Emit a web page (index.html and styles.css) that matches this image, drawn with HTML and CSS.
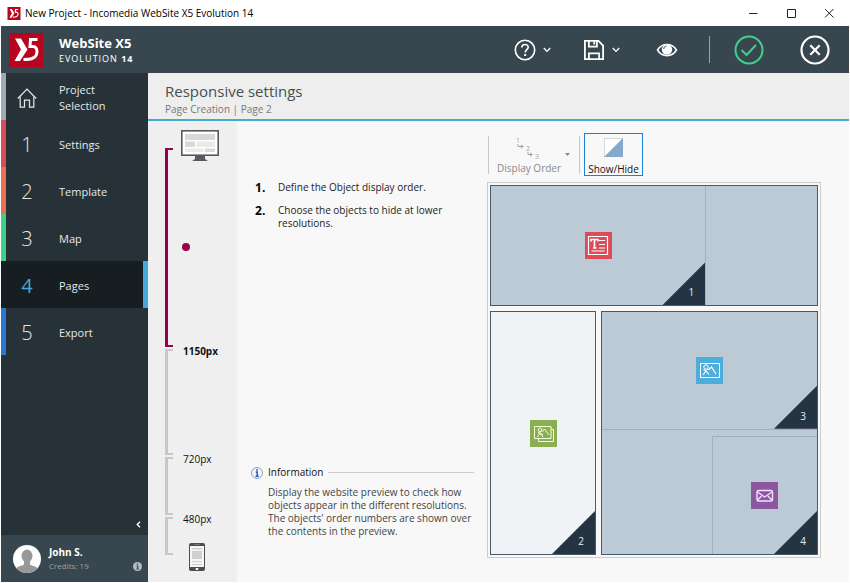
FILE: index.html
```html
<!DOCTYPE html>
<html lang="en">
<head>
<meta charset="utf-8">
<title>New Project - Incomedia WebSite X5 Evolution 14</title>
<link rel="stylesheet" href="styles.css">
</head>
<body>
<svg class="defs" aria-hidden="true">
  <symbol id="logo" viewBox="0 0 34 34">
    <rect width="34" height="34" fill="#b8051f"/>
    <path d="M5.500 5.500h6l6.500 11L10.500 28H5l6.500-11.500z" fill="#fff"/>
    <path d="M28 6.500h-7l-.5 7h3c5.500 0 5.500 10-1 12-2 .8-5 1-8.500 1" fill="none" stroke="#fff" stroke-width="3"/>
  </symbol>
  <symbol id="chevron" viewBox="0 0 8 6"><path d="M.8 1l3.200 3.400L7.200 1" fill="none" stroke="currentColor" stroke-width="1.300"/></symbol>
</svg>
<div class="window">
  <div class="titlebar">
    <svg class="titlebar-logo" aria-hidden="true"><use href="#logo"/></svg>
    <span class="titlebar-text">New Project - Incomedia WebSite X5 Evolution 14</span>
    <button class="window-button" aria-label="Minimize"><svg viewBox="0 0 10 10"><path d="M1 5.500h8.500"/></svg></button>
    <button class="window-button" aria-label="Maximize"><svg viewBox="0 0 10 10"><path d="M1.500 1.500h8v8h-8z"/></svg></button>
    <button class="window-button" aria-label="Close"><svg viewBox="0 0 10 10"><path d="M1 1l8.500 8.500M9.500 1L1 9.500"/></svg></button>
  </div>

  <header class="header">
    <svg class="brand-logo" aria-hidden="true"><use href="#logo"/></svg>
    <div class="brand">
      <div class="brand-name">WebSite X5</div>
      <div class="brand-edition">EVOLUTION <b>14</b></div>
    </div>
    <div class="actions">
      <button class="action" aria-label="Help">
        <svg width="22" height="22" viewBox="0 0 22 22" fill="none" stroke="#fff" stroke-width="1.600"><circle cx="11" cy="11" r="9.700"/><path d="M7.800 8.600c0-4.200 6.400-4 6.400-.4 0 2.300-3 2.500-3 5.300"/><path d="M11.200 15v2" stroke-width="2"/></svg>
        <svg class="chevron" aria-hidden="true"><use href="#chevron"/></svg>
      </button>
      <button class="action" aria-label="Save">
        <svg width="22" height="22" viewBox="0 0 22 22" fill="none" stroke="#fff" stroke-width="1.800"><path d="M1.900 1.900h13.600l4.600 4.600v13.600H1.900z"/><path d="M5.900 2v5.600h8V2M11.200 2.500v3M5.900 20v-5.700h10.200V20"/></svg>
        <svg class="chevron" aria-hidden="true"><use href="#chevron"/></svg>
      </button>
      <button class="action" aria-label="Preview">
        <svg width="22" height="22" viewBox="0 0 22 22"><path d="M1.500 11C6 3.500 16 3.500 20.500 11 16 18.500 6 18.500 1.500 11z" fill="none" stroke="#fff" stroke-width="1.500"/><circle cx="11" cy="10.500" r="5.200" fill="#fff"/><path d="M7.800 10c0-1.800 1-2.800 2.600-3" fill="none" stroke="#38474f"/></svg>
      </button>
      <span class="divider"></span>
      <button class="action" aria-label="Confirm">
        <svg width="30" height="30" viewBox="0 0 30 30" fill="none" stroke="#41cf8c" stroke-width="2"><circle cx="15" cy="15" r="13.500"/><path d="M7.500 15l5 5 9.500-10"/></svg>
      </button>
      <button class="action action-close" aria-label="Cancel">
        <svg width="30" height="30" viewBox="0 0 30 30" fill="none" stroke="#fff" stroke-width="2.200"><circle cx="15" cy="15" r="13.500"/><path d="M10.300 10.300l9.400 9.400M19.700 10.300l-9.400 9.400"/></svg>
      </button>
    </div>
  </header>

  <div class="body">
    <aside class="sidebar">
      <nav class="steps">
        <a class="step step-home" href="#"><span class="step-icon"><svg width="20" height="20" viewBox="0 0 20 20" fill="none" stroke="#e4e8ea" stroke-width="1.200"><path d="M.8 10.500L10 1.200l9.200 9.300"/><path d="M3.200 8.500v10.700h4.300v-7h5v7h4.300V8.500"/></svg></span><span>Project<br>Selection</span></a>
        <a class="step step-settings" href="#"><span class="step-icon">1</span><span>Settings</span></a>
        <a class="step step-template" href="#"><span class="step-icon">2</span><span>Template</span></a>
        <a class="step step-map" href="#"><span class="step-icon">3</span><span>Map</span></a>
        <a class="step step-active" href="#" aria-current="step"><span class="step-icon">4</span><span>Pages</span></a>
        <a class="step step-export" href="#"><span class="step-icon">5</span><span>Export</span></a>
      </nav>
      <button class="collapse" aria-label="Collapse"><svg width="5" height="7" viewBox="0 0 5 7"><path d="M4 .8L1.200 3.500 4 6.200" fill="none" stroke="#fff" stroke-width="1.300"/></svg></button>
      <div class="user">
        <svg width="28" height="28" viewBox="0 0 28 28"><defs><clipPath id="face"><circle cx="14" cy="14" r="14"/></clipPath></defs><circle cx="14" cy="14" r="14" fill="#fff"/><g clip-path="url(#face)" fill="#989898"><ellipse cx="14" cy="11" rx="5.500" ry="6.500"/><path d="M11 15h6v4.500c2 1.500 7 1.500 8 4.500v4H3v-4c1-3 6-3 8-4.500z"/></g></svg>
        <div class="user-text">
          <div class="user-name">John S.</div>
          <div class="user-credits">Credits: 19</div>
        </div>
        <button class="user-info" aria-label="Account information"><svg width="9" height="9" viewBox="0 0 9 9"><circle cx="4.500" cy="4.500" r="4.500" fill="#b3bcc0"/><path d="M4.500 1.500v1.300M3.500 4h1.200v2.800M3.400 7h2.400" stroke="#38474f" stroke-width="1.200" fill="none"/></svg></button>
      </div>
    </aside>

    <main class="main">
      <div class="page-head">
        <h1>Responsive settings</h1>
        <p>Page Creation | Page 2</p>
      </div>
      <div class="workspace">
        <section class="resolutions" aria-label="Resolutions">
          <div class="range range-desktop">
            <span class="bracket"></span>
            <svg class="monitor" width="38" height="32" viewBox="0 0 38 32"><path d="M14 25h10v4l3 2H11l3-2z" fill="#59595f"/><rect x=".8" y=".8" width="36.400" height="24.400" fill="#fff" stroke="#59595f" stroke-width="1.600"/><path d="M4 4h30v6H4zM4 11.500h10v5.500H4zM24 18.500h10v3.500H24z" fill="#d9d9d9"/><path d="M15.500 11.500H34v5.500H15.500zM4 18.500h18.500v3.500H4z" fill="#eaeaea"/></svg>
            <span class="marker"></span>
          </div>
          <div class="range range-large"><span class="bracket"></span><b class="range-label">1150px</b></div>
          <div class="range range-medium"><span class="bracket"></span><span class="range-label">720px</span></div>
          <div class="range range-small"><span class="bracket"></span><span class="range-label">480px</span></div>
          <svg class="phone" width="16" height="28" viewBox="0 0 16 28"><rect width="16" height="28" rx="2" fill="#4c4c52"/><path d="M1 3h14v21H1z" fill="#f5f5f5"/><path d="M3 5h10v1.500H3zM3 8h10v8H3zM3 18h10v1H3zM3 21h10v1H3z" fill="#ccd1cf"/><path d="M5 1.500h6" stroke="#777"/><rect x="6.500" y="25" width="3" height="2" rx="1" fill="#fff"/></svg>
        </section>

        <section class="guide">
          <ol class="guide-steps">
            <li>Define the Object display order.</li>
            <li>Choose the objects to hide at lower resolutions.</li>
          </ol>
          <div class="note">
            <h2><svg width="12" height="12" viewBox="0 0 12 12"><circle cx="6" cy="6" r="5.500" fill="#f1f5fc" stroke="#8aa0c0"/><path d="M6 2v1.800M4.800 5h1.400v4M4.500 9.200h3.200" stroke="#2454c6" stroke-width="1.400" fill="none"/></svg>Information</h2>
            <p>Display the website preview to check how objects appear in the different resolutions. The objects' order numbers are shown over the contents in the preview.</p>
          </div>
        </section>

        <section class="editor">
          <div class="toolbar">
            <button class="tool tool-order" disabled>
              <span class="tool-row">
                <svg width="26" height="26" viewBox="0 0 26 26" fill="#a5a5a5" stroke="#a5a5a5"><g stroke="none" class="tiny"><text x="1" y="8">1</text><text x="11" y="16">2</text><text x="20" y="24">3</text></g><path d="M3 9v2.500h3M13 17v2.500h2" fill="none"/><path d="M6 9.500l3 2-3 2zM15 17.500l3 2-3 2z" stroke="none"/></svg>
                <svg class="dropdown" width="5" height="3" viewBox="0 0 5 3"><path d="M0 0h5L2.500 3z" fill="#888"/></svg>
              </span>
              <span>Display Order</span>
            </button>
            <button class="tool tool-toggle" aria-pressed="true">
              <svg width="19" height="19" viewBox="0 0 19 19"><rect x=".5" y=".5" width="18" height="18" fill="#fff" stroke="#b5b5b5" stroke-dasharray="1 1"/><path d="M19 0v19H0z" fill="#86a8ca"/></svg>
              <span>Show/Hide</span>
            </button>
          </div>
          <div class="preview">
            <div class="band band-top">
              <div class="cell cell-lined">
                <svg class="object" viewBox="0 0 27 27"><rect width="27" height="27" fill="#dc4b57"/><g fill="none" stroke="#fff"><path d="M3.500 4.500h19v18h-19z" stroke-width="1.200"/><path d="M6 9.500V7.500h7v2M9.500 8v8M8 16h3.500" stroke-width="1.700"/><path d="M14 8.500h6M14 12.500h6M14 16h6M6.500 19h13"/></g></svg>
                <span class="corner">1</span>
              </div>
              <div class="cell"></div>
            </div>
            <div class="bands">
              <div class="band band-visible">
                <div class="cell">
                  <svg class="object" viewBox="0 0 27 27"><rect width="27" height="27" fill="#8bae52"/><g fill="none" stroke="#f4ffdc"><path d="M4.500 6.500h16.500v12H4.500z"/><path d="M21.500 9.500h2v12h-15v-2.500"/><circle cx="10" cy="9.800" r="1.800"/><path d="M7.500 17l2.500-3.500-2-1 3.500 1 1.500 1.500M10 13l3 4M12 12l2.500-3 4.500 6"/></g></svg>
                  <span class="corner">2</span>
                </div>
              </div>
              <div class="band band-stack">
                <div class="cell">
                  <svg class="object" viewBox="0 0 27 27"><rect width="27" height="27" fill="#4daddb"/><g fill="none" stroke="#fff"><path d="M4.500 6.500h19v14h-19z"/><circle cx="10" cy="10" r="2.200"/><path d="M7 18l3-4-2.500-1.500M10 13.500l3 4M11 12.500h2l2.500-2.500 4.500 7" stroke-width="1.200"/></g></svg>
                  <span class="corner">3</span>
                </div>
                <div class="cell cell-nested">
                  <svg class="object" viewBox="0 0 27 27"><rect width="27" height="27" fill="#8b589f"/><g fill="none" stroke="#f6dfff" stroke-width="1.400"><rect x="6" y="8.500" width="15.500" height="10.500" rx="1.500"/><path d="M6.500 10l7.200 5 7.200-5M6.500 18l4-4M20.900 18l-4-4"/></g></svg>
                  <span class="corner">4</span>
                </div>
              </div>
            </div>
          </div>
        </section>
      </div>
    </main>
  </div>
</div>
</body>
</html>
```
FILE: styles.css
```css
* { box-sizing: border-box; }

body {
  margin: 0;
  background: #fff;
  font: 11px/16px "Open Sans", "Noto Sans", sans-serif;
  color: #222;
}

button {
  margin: 0;
  padding: 0;
  border: 0;
  background: none;
  font: inherit;
  color: inherit;
}

svg { display: block; flex: none; }
.defs { position: absolute; width: 0; height: 0; }
h1, h2, p, ol { margin: 0; padding: 0; font-weight: 400; }

.window {
  display: flex;
  flex-direction: column;
  min-height: 100vh;
  padding: 0 1px 1px;
}

/* Title bar */
.titlebar {
  display: flex;
  align-items: center;
  height: 26px;
  padding: 0 1px 0 6px;
}
.titlebar-logo { width: 14px; height: 13px; margin-right: 4px; }
.titlebar-text { flex: 1; font-size: 10px; color: #000; }
.window-button { display: flex; justify-content: center; width: 38px; }
.window-button svg { width: 10px; height: 10px; fill: none; stroke: #222; }

/* Header */
.header {
  display: flex;
  align-items: center;
  height: 47px;
  padding: 0 19px 0 8px;
  background: #38474f;
  color: #fff;
}
.brand-logo { width: 35px; height: 34px; }
.brand { margin-left: 15px; }
.brand-name { font-size: 13px; font-weight: 700; line-height: 18px; }
.brand-edition { font-size: 9px; line-height: 14px; letter-spacing: 1px; }
.actions { display: flex; align-items: center; margin-left: auto; }
.action { display: flex; align-items: center; gap: 7px; margin-right: 32px; }
.action + .action { margin-right: 36px; }
.action + .action + .action { margin-right: 31px; }
.divider { width: 1px; height: 27px; margin-right: 24px; background: #98a3a8; }
.divider + .action { margin-right: 36px; }
.action.action-close { margin-right: 0; }
.chevron { width: 8px; height: 6px; }

.body { display: flex; flex: 1; }

/* Sidebar */
.sidebar {
  display: flex;
  flex-direction: column;
  width: 147px;
  background: #273238;
  color: #e4e8ea;
}
.step {
  display: flex;
  align-items: center;
  height: 47px;
  padding-top: 2px;
  border-left: 5px solid transparent;
  border-right: 5px solid transparent;
  color: inherit;
  text-decoration: none;
}
.step-icon {
  display: flex;
  justify-content: center;
  width: 42px;
  margin-right: 11px;
  font-size: 20px;
  font-weight: 300;
}
.step-home { border-left-color: #9eabb0; }
.step-settings { border-left-color: #d94c5a; }
.step-template { border-left-color: #e87053; }
.step-map { border-left-color: #41cf8c; }
.step-active {
  border-left-color: #161e22;
  border-right-color: #45aad9;
  background: #161e22;
}
.step-active .step-icon { color: #45aad9; font-weight: 400; }
.step-export { border-left-color: #2878d8; }
.collapse { align-self: flex-end; margin: auto 7px 7px auto; }
.user {
  display: flex;
  align-items: center;
  height: 47px;
  padding: 0 6px 0 12px;
  background: #38474f;
}
.user-text { margin-left: 8px; line-height: 14px; }
.user-name { font-size: 10px; font-weight: 700; color: #fff; }
.user-credits { font-size: 8px; color: #98a4a9; }
.user-info { align-self: flex-end; margin: 0 0 11px auto; }

/* Page area */
.main { display: flex; flex: 1; flex-direction: column; min-width: 0; }
.page-head {
  height: 48px;
  padding: 8px 17px 0;
  border-bottom: 2px solid #45aad0;
  background: #eee;
}
.page-head h1 { font-size: 15px; line-height: 20px; color: #454f54; }
.page-head p { font-size: 10px; line-height: 16px; color: #777; }
.workspace {
  display: grid;
  flex: 1;
  grid-template-columns: 89px 237fr 375fr;
  background: #f8f8f8;
}

/* Resolution scale */
.resolutions {
  display: flex;
  flex-direction: column;
  gap: 2px;
  padding: 27px 17px 11px;
  background: #efefef;
}
.range { display: grid; grid-template-columns: 8px 1fr; column-gap: 10px; }
.bracket {
  grid-row: 1 / span 2;
  border: 2px solid #c8c8c8;
  border-left-width: 3px;
  border-right: 0;
}
.range-desktop { flex: 199; }
.range-desktop .bracket { border-color: #96004b; }
.range-large { flex: 107; }
.range-medium { flex: 58; }
.range-small { flex: 38; }
.range-label { margin-top: -6px; color: #111; font-size: 10px; }
.monitor { grid-area: 1 / 2; justify-self: start; margin: -18px 0 0 -2px; }
.marker {
  grid-area: 1 / 2 / span 2;
  align-self: center;
  width: 8px;
  height: 8px;
  margin-left: -1px;
  border-radius: 50%;
  background: #96004b;
}
.phone { margin: -14px 0 0 24px; }

/* Instructions */
.guide {
  display: flex;
  flex-direction: column;
  justify-content: space-between;
  padding: 60px 0 44px 14px;
  font-size: 10px;
  line-height: 13px;
}
.guide-steps { list-style: none; counter-reset: step; }
.guide-steps li {
  display: grid;
  grid-template-columns: 23px 1fr;
  margin-bottom: 10px;
  padding: 0 24px 0 4px;
  counter-increment: step;
}
.guide-steps li::before {
  content: counter(step) ".";
  font-size: 12px;
  font-weight: 700;
  color: #000;
}
.note h2 {
  display: flex;
  align-items: center;
  gap: 5px;
  margin-bottom: 7px;
  font-size: 10px;
  color: #111;
}
.note h2::after { content: ""; flex: 1; height: 1px; background: #ccc; }
.note p { padding-left: 17px; color: #444; }

/* Editor */
.editor {
  display: flex;
  flex-direction: column;
  padding: 12px 28px 24px 13px;
}
.toolbar {
  display: flex;
  gap: 4px;
  height: 43px;
  margin-bottom: 6px;
  font-size: 10px;
  line-height: 14px;
}
.tool { display: flex; flex-direction: column; }
.tool-order {
  align-items: flex-start;
  width: 92px;
  height: 38px;
  margin: 3px 0 0 1px;
  padding-left: 8px;
  border: solid #c8c8c8;
  border-width: 0 1px;
  color: #8a8a8a;
}
.tool-row {
  display: flex;
  align-self: stretch;
  align-items: flex-end;
  height: 25px;
  padding: 0 9px 0 18px;
}
.tool-row .dropdown { margin: 0 0 5px auto; }
.tiny { font-size: 7px; }
.tool.tool-toggle {
  align-items: center;
  gap: 5px;
  width: 59px;
  padding-top: 4px;
  border: 1px solid #1c80d4;
  color: #111;
}
.preview {
  display: flex;
  flex: 1;
  flex-direction: column;
  gap: 5px;
  padding: 2px;
  border: 1px solid #ccc;
}
.band { display: grid; border: 1px solid #48596a; background: #bccad5; }
.band-top { flex: 120; grid-template-columns: 216fr 111fr; }
.bands { display: grid; flex: 245; grid-template-columns: 106fr 217fr; gap: 5px; }
.band-visible { background: #eff3f6; }
.band-stack { grid-template-rows: 119fr 126fr; }
.band-stack .cell:first-child { border-bottom: 1px solid #9fb2c3; }
.cell { position: relative; display: grid; place-items: center; }
.cell-lined { border-right: 1px solid #9fb2c3; }
.band-stack .cell-nested {
  margin: 6px 0 0 51%;
  border: solid #9fb2c3;
  border-width: 1px 0 0 1px;
}
.object { width: 27px; height: 27px; }
.corner {
  position: absolute;
  right: 0;
  bottom: 0;
  width: 43px;
  height: 43px;
  padding: 22px 11px 0 0;
  background: #253443;
  clip-path: polygon(100% 0, 100% 100%, 0 100%);
  color: #e8edf2;
  font-size: 10px;
  text-align: right;
}
```
